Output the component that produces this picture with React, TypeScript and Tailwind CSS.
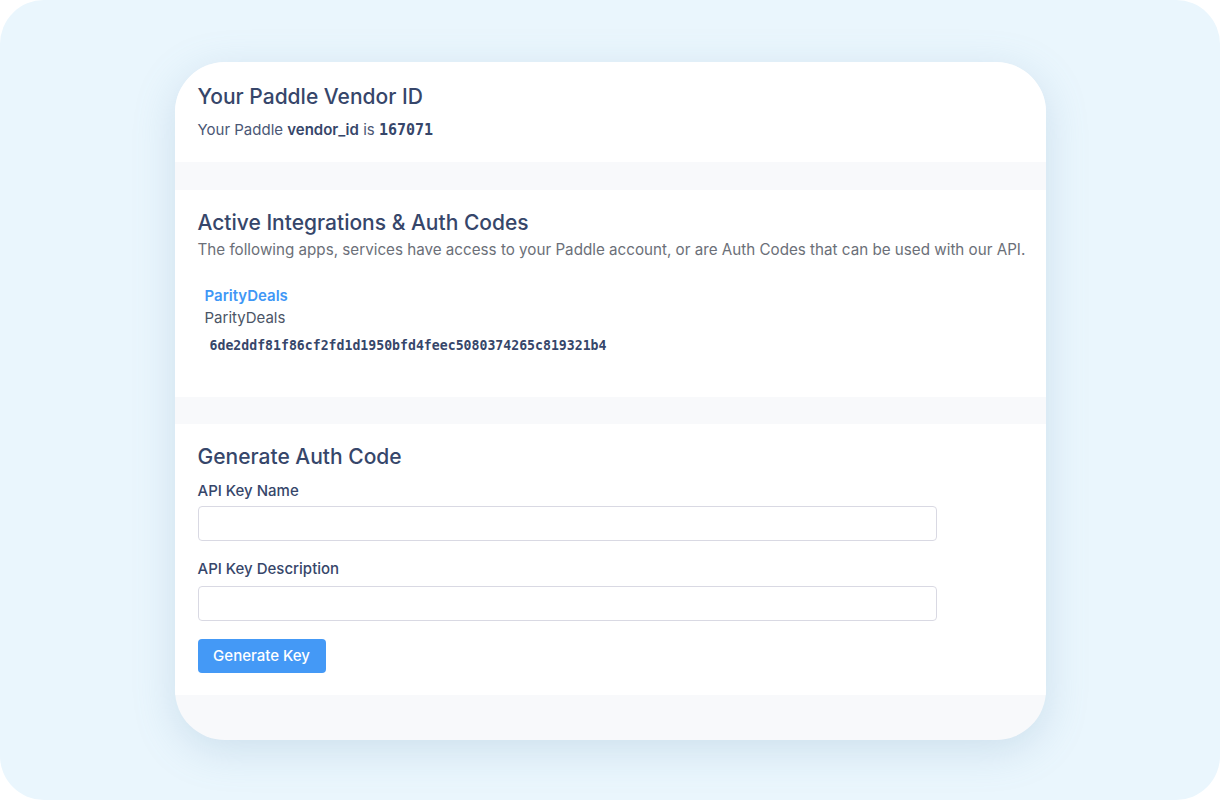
const HASH = '6de2ddf81f86cf2fd1d1950bfd4feec5080374265c819321b4';

export default function App() {
  return (
    <div className="h-[800px] w-[1220px] bg-white font-['Inter',sans-serif]">
      <div className="flex h-full w-full justify-center rounded-[44px] bg-[#eaf6fd] pt-[62px]">
        <div className="flex h-[678px] w-[871px] flex-col overflow-hidden rounded-[50px] bg-[#f8f9fb] shadow-[0_10px_40px_rgba(120,160,190,0.25)]">
          <section className="h-[100px] bg-white pl-[23px] pt-[21px]">
            <h2 className="text-[21px] leading-[28px] font-medium text-[#36466a]">Your Paddle Vendor ID</h2>
            <p className="mt-[8px] text-[15px] leading-[22px] text-[#4b5775]">
              Your Paddle <span className="font-semibold text-[#36466a]">vendor_id</span> is{' '}
              <span className="font-['DejaVu_Sans_Mono',monospace] text-[15px] font-bold text-[#36466a]">167071</span>
            </p>
          </section>

          <section className="mt-[28px] h-[207px] bg-white pl-[23px] pt-[19px]">
            <h2 className="text-[21px] leading-[28px] font-medium text-[#36466a]">Active Integrations &amp; Auth Codes</h2>
            <p className="mt-[2px] text-[15.2px] leading-[22px] text-[#6b6f78]">
              The following apps, services have access to your Paddle account, or are Auth Codes that can be used with our API.
            </p>
            <div className="pl-[7px]">
              <div className="mt-[24px] text-[15px] leading-[22px] font-semibold text-[#3f97f6]">ParityDeals</div>
              <div className="text-[15px] leading-[22px] text-[#4b5566]">ParityDeals</div>
              <div className="mt-[7px] pl-[5px] font-['DejaVu_Sans_Mono',monospace] text-[13.2px] leading-[20px] font-semibold text-[#36466a]">
                {HASH}
              </div>
            </div>
          </section>

          <section className="mt-[27px] h-[271px] bg-white pl-[23px] pt-[19px]">
            <h2 className="text-[21px] leading-[28px] font-medium text-[#36466a]">Generate Auth Code</h2>
            <label className="mt-[9px] block text-[15px] leading-[22px] font-medium text-[#36466a]">API Key Name</label>
            <input
              type="text"
              className="mt-[4px] block h-[35px] w-[739px] rounded-[4px] border border-[#d9d9e3] bg-white px-3 outline-none"
            />
            <label className="mt-[17px] block text-[15px] leading-[22px] font-medium text-[#36466a]">API Key Description</label>
            <input
              type="text"
              className="mt-[6px] block h-[35px] w-[739px] rounded-[4px] border border-[#d9d9e3] bg-white px-3 outline-none"
            />
            <button className="mt-[18px] block h-[34px] w-[128px] rounded-[4px] bg-[#4499f6] text-[15px] font-medium text-white">
              Generate Key
            </button>
          </section>
        </div>
      </div>
    </div>
  );
}
